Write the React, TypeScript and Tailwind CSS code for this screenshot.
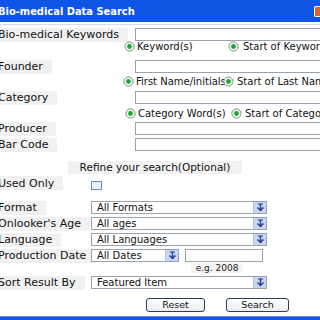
import React from 'react';

const Radio: React.FC = () => (
  <svg width="11" height="11" viewBox="0 0 11 11" className="shrink-0">
    <circle cx="5.5" cy="5.5" r="4.6" fill="#f4f8f4" stroke="#6f9a78" strokeWidth="1" />
    <circle cx="5.5" cy="5.5" r="2.4" fill="#22a33a" />
  </svg>
);

const Label: React.FC<{ text: string }> = ({ text }) => (
  <span className="inline-flex items-center h-[14px] bg-[#f1f1f1] pr-[9px] -ml-[2px] text-[11px] leading-none text-[#111] whitespace-nowrap">
    {text}
  </span>
);

const Arrow: React.FC = () => (
  <div className="w-[13px] h-full flex items-center justify-center bg-[#c9d6f2] border-l border-[#b7c4de]">
    <svg width="9" height="10" viewBox="0 0 9 10">
      <path d="M4.5 1v6M1.5 4.5l3 3 3-3" stroke="#1f3f8c" strokeWidth="1.4" fill="none" />
      <path d="M2 1h5" stroke="#1f3f8c" strokeWidth="1" />
    </svg>
  </div>
);

const Select: React.FC<{ value: string; w: string }> = ({ value, w }) => (
  <div className={`flex h-full ${w} border border-[#9aa3ad] bg-white`}>
    <span className="flex-1 pl-[5px] text-[10px] leading-[12px] text-[#111] whitespace-nowrap overflow-hidden">{value}</span>
    <Arrow />
  </div>
);

const TextRow: React.FC<{ label: string; mt: string }> = ({ label, mt }) => (
  <div className={`flex h-[13px] ${mt}`}>
    <div className="w-[135px] shrink-0 flex items-center">
      <Label text={label} />
    </div>
    <div className="flex-1 border border-[#9aa3ad] bg-white mr-[-10px]" />
  </div>
);

const SelectRow: React.FC<{ label: string; value: string; mt: string }> = ({ label, value, mt }) => (
  <div className={`flex h-[13px] ${mt}`}>
    <div className="w-[91px] shrink-0 flex items-center">
      <Label text={label} />
    </div>
    <Select value={value} w="w-[176px]" />
  </div>
);

export default function App() {
  return (
    <div className="w-[320px] h-[320px] overflow-hidden bg-white flex flex-col font-['DejaVu_Sans',Verdana,sans-serif]">
      <div className="h-[22px] shrink-0 bg-[#0f56e6] flex items-center justify-between">
        <span className="-ml-[2px] text-white font-bold text-[11px] leading-none font-['DejaVu_Sans_Condensed','DejaVu_Sans',sans-serif]">
          Bio-medical Data Search
        </span>
        <div className="w-[6px] h-[11px] bg-[#d9602f] border-l border-y border-white rounded-l-[2px]" />
      </div>
      <div className="h-px mt-[2px] bg-[#d6dbe5]" />

      <TextRow label="Bio-medical Keywords" mt="mt-[3px]" />
      <div className="flex items-center h-[11px] text-[10px] leading-none text-[#111] whitespace-nowrap">
        <div className="ml-[124px] w-[104px] shrink-0 flex items-center gap-[2px]">
          <Radio />
          <span>Keyword(s)</span>
        </div>
        <div className="shrink-0 flex items-center gap-[4px]">
          <Radio />
          <span>Start of Keywords</span>
        </div>
      </div>

      <TextRow label="Founder" mt="mt-[8px]" />
      <div className="flex items-center h-[11px] mt-[3px] text-[10px] leading-none text-[#111] whitespace-nowrap">
        <div className="ml-[123px] w-[100px] shrink-0 flex items-center gap-[2px]">
          <Radio />
          <span>First Name/initials</span>
        </div>
        <div className="shrink-0 flex items-center gap-[3px]">
          <Radio />
          <span>Start of Last Name</span>
        </div>
      </div>

      <TextRow label="Category" mt="mt-[4px]" />
      <div className="flex items-center h-[11px] mt-[4px] text-[10px] leading-none text-[#111] whitespace-nowrap">
        <div className="ml-[125px] w-[106px] shrink-0 flex items-center gap-[2px]">
          <Radio />
          <span>Category Word(s)</span>
        </div>
        <div className="shrink-0 flex items-center gap-[3px]">
          <Radio />
          <span>Start of Category</span>
        </div>
      </div>

      <TextRow label="Producer" mt="mt-[3px]" />
      <TextRow label="Bar Code" mt="mt-[3px]" />

      <div className="flex h-[13px] mt-[10px]">
        <span className="ml-[68px] w-[174px] bg-[#f1f1f1] text-[10.5px] leading-none text-[#111] flex items-center justify-center whitespace-nowrap">
          Refine your search(Optional)
        </span>
      </div>

      <div className="flex h-[14px] mt-[2px] items-center">
        <div className="w-[91px] shrink-0 flex items-center">
          <Label text="Used Only" />
        </div>
        <div className="w-[11px] h-[9px] mt-[5px] border border-[#6f8db8] bg-[#eaf0fa]" />
      </div>

      <SelectRow label="Format" value="All Formats" mt="mt-[11px]" />
      <SelectRow label="Onlooker's Age" value="All ages" mt="mt-[3px]" />
      <SelectRow label="Language" value="All Languages" mt="mt-[3px]" />

      <div className="flex h-[13px] mt-[3px]">
        <div className="w-[91px] shrink-0 flex items-center">
          <Label text="Production Date" />
        </div>
        <Select value="All Dates" w="w-[88px]" />
        <div className="ml-[6px] w-[78px] border border-[#9aa3ad] bg-white" />
      </div>
      <div className="flex h-[10px] mt-[1px]">
        <span className="ml-[191px] w-[52px] bg-[#f4f4f4] text-[9px] leading-none text-[#222] flex items-center justify-center">e.g. 2008</span>
      </div>

      <SelectRow label="Sort Result By" value="Featured Item" mt="mt-[3px]" />

      <div className="flex h-[14px] mt-[9px] text-[9.5px] leading-none text-[#111]">
        <button className="ml-[146px] w-[59px] h-full rounded-[3px] border border-[#2b3c55] bg-gradient-to-b from-white to-[#eceef2] flex items-center justify-center">
          Reset
        </button>
        <button className="ml-[21px] w-[63px] h-full rounded-[3px] border border-[#2b3c55] bg-gradient-to-b from-white to-[#eceef2] flex items-center justify-center">
          Search
        </button>
      </div>

      <div className="mt-auto h-[4px] bg-[#1755df] border-t border-[#5a8af0]" />
    </div>
  );
}
